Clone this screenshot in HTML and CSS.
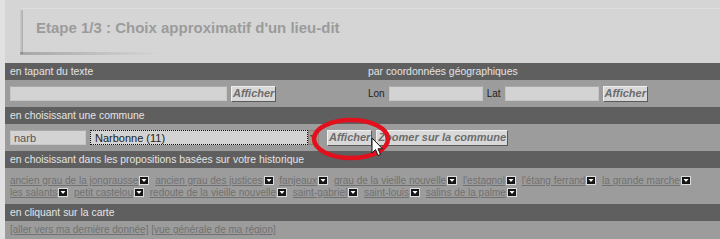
FILE: index.html
```html
<!DOCTYPE html>
<html lang="fr">
<head>
<meta charset="utf-8">
<title>Etape 1/3</title>
<link rel="stylesheet" href="styles.css">
</head>
<body>
<div class="page">
  <div class="title-box"><h1>Etape 1/3 : Choix approximatif d'un lieu-dit</h1></div>
  <div class="panel">
    <div class="cols">
      <div class="hdr">en tapant du texte</div>
      <div class="hdr">par coordonnées géographiques</div>
      <div class="row">
        <input class="field w-text" type="text" value="">
        <button class="btn">Afficher</button>
      </div>
      <div class="row">
        <span class="lbl">Lon</span>
        <input class="field w-coord" type="text" value="">
        <span class="lbl">Lat</span>
        <input class="field w-coord" type="text" value="">
        <button class="btn">Afficher</button>
      </div>
    </div>
    <div class="hdr">en choisissant une commune</div>
    <div class="row">
      <input class="field w-narb" type="text" value="narb">
      <div class="sel-wrap">
        <select class="sel"><option>Narbonne (11)</option></select>
        <span class="sel-arrow"><svg width="7" height="5" viewBox="0 0 7 5"><polygon points="0,0 7,0 3.5,4.5" fill="#4a4a4a"/></svg></span>
      </div>
      <button class="btn">Afficher</button>
      <button class="btn">Zoomer sur la commune</button>
    </div>
    <div class="hdr">en choisissant dans les propositions basées sur votre historique</div>
    <div class="props">
      <span class="prop"><a href="#">ancien grau de la jongrausse</a><svg class="dd" viewBox="0 0 10 9"><rect x="0.5" y="0.5" width="9" height="8" fill="#151515" stroke="#dcdcdc"/><polygon points="2.5,3 7.5,3 5,6" fill="#fff"/></svg></span>
      <span class="prop"><a href="#">ancien grau des justices</a><svg class="dd" viewBox="0 0 10 9"><rect x="0.5" y="0.5" width="9" height="8" fill="#151515" stroke="#dcdcdc"/><polygon points="2.5,3 7.5,3 5,6" fill="#fff"/></svg></span>
      <span class="prop"><a href="#">fanjeaux</a><svg class="dd" viewBox="0 0 10 9"><rect x="0.5" y="0.5" width="9" height="8" fill="#151515" stroke="#dcdcdc"/><polygon points="2.5,3 7.5,3 5,6" fill="#fff"/></svg></span>
      <span class="prop"><a href="#">grau de la vieille nouvelle</a><svg class="dd" viewBox="0 0 10 9"><rect x="0.5" y="0.5" width="9" height="8" fill="#151515" stroke="#dcdcdc"/><polygon points="2.5,3 7.5,3 5,6" fill="#fff"/></svg></span>
      <span class="prop"><a href="#">l'estagnol</a><svg class="dd" viewBox="0 0 10 9"><rect x="0.5" y="0.5" width="9" height="8" fill="#151515" stroke="#dcdcdc"/><polygon points="2.5,3 7.5,3 5,6" fill="#fff"/></svg></span>
      <span class="prop"><a href="#">l'étang ferrand</a><svg class="dd" viewBox="0 0 10 9"><rect x="0.5" y="0.5" width="9" height="8" fill="#151515" stroke="#dcdcdc"/><polygon points="2.5,3 7.5,3 5,6" fill="#fff"/></svg></span>
      <span class="prop"><a href="#">la grande marche</a><svg class="dd" viewBox="0 0 10 9"><rect x="0.5" y="0.5" width="9" height="8" fill="#151515" stroke="#dcdcdc"/><polygon points="2.5,3 7.5,3 5,6" fill="#fff"/></svg></span>
      <span class="prop"><a href="#">les salants</a><svg class="dd" viewBox="0 0 10 9"><rect x="0.5" y="0.5" width="9" height="8" fill="#151515" stroke="#dcdcdc"/><polygon points="2.5,3 7.5,3 5,6" fill="#fff"/></svg></span>
      <span class="prop"><a href="#">petit castelou</a><svg class="dd" viewBox="0 0 10 9"><rect x="0.5" y="0.5" width="9" height="8" fill="#151515" stroke="#dcdcdc"/><polygon points="2.5,3 7.5,3 5,6" fill="#fff"/></svg></span>
      <span class="prop"><a href="#">redoute de la vieille nouvelle</a><svg class="dd" viewBox="0 0 10 9"><rect x="0.5" y="0.5" width="9" height="8" fill="#151515" stroke="#dcdcdc"/><polygon points="2.5,3 7.5,3 5,6" fill="#fff"/></svg></span>
      <span class="prop"><a href="#">saint-gabriel</a><svg class="dd" viewBox="0 0 10 9"><rect x="0.5" y="0.5" width="9" height="8" fill="#151515" stroke="#dcdcdc"/><polygon points="2.5,3 7.5,3 5,6" fill="#fff"/></svg></span>
      <span class="prop"><a href="#">saint-louis</a><svg class="dd" viewBox="0 0 10 9"><rect x="0.5" y="0.5" width="9" height="8" fill="#151515" stroke="#dcdcdc"/><polygon points="2.5,3 7.5,3 5,6" fill="#fff"/></svg></span>
      <span class="prop"><a href="#">salins de la palme</a><svg class="dd" viewBox="0 0 10 9"><rect x="0.5" y="0.5" width="9" height="8" fill="#151515" stroke="#dcdcdc"/><polygon points="2.5,3 7.5,3 5,6" fill="#fff"/></svg></span>
    </div>
    <div class="hdr">en cliquant sur la carte</div>
    <div class="links">
      <a href="#">[aller vers ma dernière donnée]</a> <a href="#">[vue générale de ma région]</a>
    </div>
  </div>
</div>
<svg class="overlay" width="720" height="239" viewBox="0 0 720 239">
  <ellipse cx="351" cy="139" rx="37" ry="19" fill="none" stroke="#e2101c" stroke-width="4.5"/>
  <path d="M372 138 L372 153 L375.5 149.5 L378 155.5 L380.5 154.5 L378 148.8 L382.5 148.8 Z" fill="#fff" stroke="#111" stroke-width="1"/>
</svg>
</body>
</html>
```
FILE: styles.css
```css
* { box-sizing: border-box; }
html, body { margin: 0; padding: 0; }
body {
  width: 720px;
  height: 239px;
  overflow: hidden;
  background: #e1e1e1;
  font-family: "Liberation Sans", Arial, sans-serif;
}
.page {
  margin-left: 5px;
  height: 239px;
  background: #d5d5d5;
  padding-top: 8px;
}
.title-box {
  position: relative;
  margin-left: 17px;
  height: 45px;
  padding: 10px 0 0 14px;
  border-top: 1px solid #dedede;
}
.title-box::before {
  content: "";
  position: absolute;
  left: -2px;
  top: 1px;
  bottom: -1px;
  width: 3px;
  background: linear-gradient(to right, rgba(0,0,0,0.03), rgba(0,0,0,0.2));
}
.title-box::after {
  content: "";
  position: absolute;
  left: -2px;
  bottom: -2px;
  width: 140px;
  height: 3px;
  background: linear-gradient(to right, rgba(0,0,0,0.22), rgba(0,0,0,0));
}
.title-box h1 {
  margin: 0;
  font-size: 15px;
  line-height: 17px;
  font-weight: bold;
  color: #9b9b9b;
}
.panel { margin-top: 10px; }
.cols {
  display: grid;
  grid-template-columns: 358px 1fr;
}
.hdr {
  height: 17px;
  line-height: 17px;
  background: #5f5f5f;
  color: #e4e4e4;
  font-size: 10.4px;
  padding-left: 5px;
  white-space: nowrap;
}
.row {
  height: 27px;
  background: #9c9c9c;
  display: flex;
  align-items: center;
  gap: 4px;
  padding-left: 5px;
}
.lbl {
  font-size: 10px;
  color: #222;
}
.field {
  height: 15px;
  margin: 0;
  padding: 0 3px;
  background: #d3d3d3;
  border: 1px solid #c6c6c6;
  border-top-color: #a9a9a9;
  font: 11px "Liberation Sans", Arial, sans-serif;
  color: #555;
  outline: none;
}
.w-text { width: 217px; }
.w-coord { width: 94px; }
.w-narb { width: 76px; }
.btn {
  height: 16px;
  margin: 0;
  padding: 0 1px;
  background: #d8d8d8;
  border: 1px solid;
  border-color: #efefef #595959 #595959 #efefef;
  font: italic bold 11px "Liberation Sans", Arial, sans-serif;
  line-height: 13px;
  color: #6c6c6c;
}
.sel-wrap {
  display: flex;
  margin-right: 4px;
}
.sel {
  appearance: none;
  -webkit-appearance: none;
  width: 218px;
  height: 15px;
  margin: 0;
  padding: 0 4px;
  border: 1px dotted #111;
  border-radius: 0;
  background: #d3d3d3;
  font: 11px "Liberation Sans", Arial, sans-serif;
  color: #222;
}
.sel-arrow {
  width: 11px;
  height: 15px;
  background: #a39b90;
  border: 1px solid #8a8278;
  display: flex;
  align-items: center;
  justify-content: center;
}
.props {
  height: 36px;
  background: #9c9c9c;
  padding: 7px 5px 5px 5px;
  font-size: 10px;
  line-height: 12px;
}
.prop { white-space: nowrap; margin-right: 3px; }
.props a, .links a {
  color: #717171;
  text-decoration: underline;
}
.dd {
  display: inline-block;
  width: 10px;
  height: 9px;
  margin-left: 1px;
  vertical-align: -1px;
}
.links {
  height: 18px;
  background: #9c9c9c;
  padding: 3px 5px 0 5px;
  font-size: 10px;
  line-height: 12px;
}
.overlay {
  position: absolute;
  left: 0;
  top: 0;
  pointer-events: none;
}
```
